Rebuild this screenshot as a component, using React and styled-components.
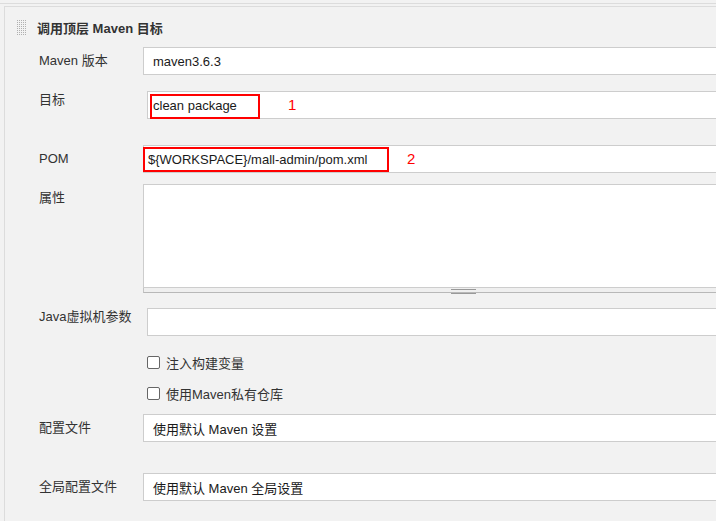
import React from 'react'
import styled, { createGlobalStyle } from 'styled-components'

const GlobalStyle = createGlobalStyle`
  html, body {
    margin: 0;
    padding: 0;
    background: #f2f2f2;
    overflow: hidden;
  }
  body {
    font-family: "Liberation Sans", "Noto Sans CJK SC", sans-serif;
    font-size: 13px;
    color: #333;
  }
`

const Page = styled.div`
  width: 716px;
  height: 521px;
  padding-top: 3px;
  box-sizing: border-box;
  overflow: hidden;
`

const OuterRule = styled.div`
  border-top: 1px solid #dcdcdc;
  margin-bottom: 2px;
`

const Panel = styled.section`
  margin-left: 4px;
  height: 515px;
  border-top: 1px solid #dcdcdc;
  border-left: 1px solid #dcdcdc;
  box-sizing: border-box;
`

const Header = styled.div`
  display: flex;
  align-items: center;
  height: 40px;
  padding-left: 11px;
  box-sizing: border-box;
`

const Title = styled.h3`
  margin: 0 0 0 10px;
  font-size: 13px;
  font-weight: bold;
  color: #333;
`

const Row = styled.div`
  display: grid;
  grid-template-columns: 104px 1fr;
  margin-top: ${p => p.$top}px;
  padding-left: 34px;
`

const Label = styled.label`
  padding-top: ${p => (p.$shifted ? 1 : 6)}px;
  line-height: 16px;
  white-space: nowrap;
  color: #333;
`

const Field = styled.div`
  position: relative;
  margin-left: ${p => (p.$shifted ? 4 : 0)}px;
`

const Input = styled.div`
  height: 28px;
  width: 620px;
  box-sizing: border-box;
  background: #fff;
  border: 1px solid #cdcdcd;
  border-right: none;
  padding-left: ${p => p.$pad ?? 9}px;
  display: flex;
  align-items: center;
  color: #1a1a1a;
  font-size: 13px;
`

const TextArea = styled.div`
  width: 620px;
  height: 104px;
  box-sizing: border-box;
  background: #fff;
  border: 1px solid #cdcdcd;
  border-right: none;
`

const ResizeBar = styled.div`
  width: 620px;
  height: 5px;
  box-sizing: border-box;
  background: #efefef;
  border-left: 1px solid #c4c4c4;
  border-bottom: 1px solid #b8b8b8;
  display: flex;
  justify-content: center;
  padding-left: 20px;
`

const Grip = styled.div`
  width: 25px;
  height: 3px;
  margin-top: 1px;
  border-top: 1px solid #999;
  border-bottom: 1px solid #999;
`

const CheckRow = styled.label`
  display: flex;
  align-items: center;
  gap: 6px;
  margin-left: 142px;
  margin-top: ${p => p.$top}px;
  height: 16px;
  color: #333;
`

const Box = styled.span`
  width: 11px;
  height: 11px;
  border: 1px solid #666;
  border-radius: 2px;
  background: #fff;
`

const Mark = styled.div`
  position: absolute;
  left: ${p => p.$left}px;
  top: ${p => p.$topOff}px;
  width: ${p => p.$w}px;
  height: ${p => p.$h}px;
  border: 2px solid #f00;
  box-sizing: border-box;
`

const Note = styled.span`
  position: absolute;
  left: ${p => p.$left}px;
  top: 5px;
  color: #f00;
  font-size: 15px;
  line-height: 18px;
`

const Spinner = styled.span`
  position: absolute;
  right: -6px;
  top: 10px;
  width: 9px;
  height: 9px;
  border: 1px dashed #aaa;
  border-radius: 50%;
`

const GripIcon = () => (
  <svg width="11" height="17" viewBox="0 0 11 17">
    {Array.from({ length: 8 }).map((_, r) =>
      Array.from({ length: 5 }).map((_, c) => (
        <rect
          key={`${r}-${c}`}
          x={c * 2 + 1}
          y={r * 2 + 1}
          width="1"
          height="1"
          fill="#b0b0b0"
        />
      ))
    )}
  </svg>
)

const App = () => (
  <Page>
    <GlobalStyle />
    <OuterRule />
    <Panel>
      <Header>
        <GripIcon />
        <Title>调用顶层 Maven 目标</Title>
      </Header>

      <Row $top={0}>
        <Label>Maven 版本</Label>
        <Field>
          <Input>maven3.6.3</Input>
        </Field>
      </Row>

      <Row $top={16}>
        <Label $shifted>目标</Label>
        <Field $shifted>
          <Input $pad={5}>clean package</Input>
          <Mark $left={3} $topOff={3} $w={110} $h={25} />
          <Note $left={141}>1</Note>
        </Field>
      </Row>

      <Row $top={26}>
        <Label>POM</Label>
        <Field>
          <Input $pad={4}>{'${WORKSPACE}/mall-admin/pom.xml'}</Input>
          <Mark $left={0} $topOff={2} $w={246} $h={25} />
          <Note $left={264}>2</Note>
        </Field>
      </Row>

      <Row $top={11}>
        <Label>属性</Label>
        <Field>
          <TextArea />
          <ResizeBar>
            <Grip />
          </ResizeBar>
        </Field>
      </Row>

      <Row $top={15}>
        <Label $shifted>Java虚拟机参数</Label>
        <Field $shifted>
          <Input />
        </Field>
      </Row>

      <CheckRow $top={18}>
        <Box />
        注入构建变量
      </CheckRow>
      <CheckRow $top={15}>
        <Box />
        使用Maven私有仓库
      </CheckRow>

      <Row $top={13}>
        <Label>配置文件</Label>
        <Field>
          <Input>使用默认 Maven 设置</Input>
        </Field>
      </Row>

      <Row $top={31}>
        <Label>全局配置文件</Label>
        <Field>
          <Input>使用默认 Maven 全局设置</Input>
          <Spinner />
        </Field>
      </Row>
    </Panel>
  </Page>
)

export default App
